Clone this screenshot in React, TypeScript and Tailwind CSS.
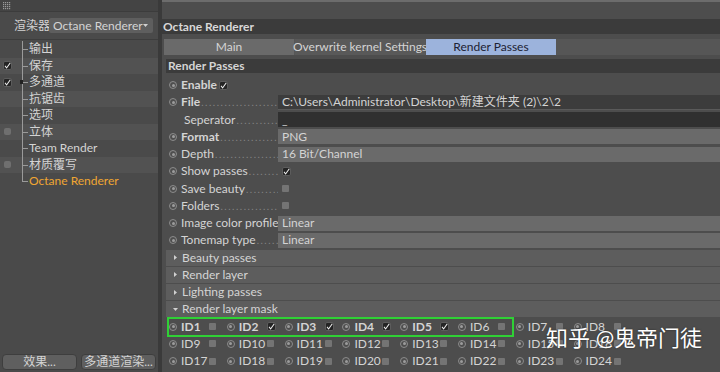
import React from 'react'

const Radio = () => (
  <span className="flex h-[8px] w-[8px] shrink-0 items-center justify-center rounded-full border border-[#8c8c8c] bg-[#4e4e4e]">
    <span className="block h-[3px] w-[3px] rounded-full bg-[#9c9c9c]" />
  </span>
)

const Check = ({ on }: { on?: boolean }) =>
  on ? (
    <span className="flex h-[9px] w-[9px] shrink-0 items-center justify-center rounded-[2px] border border-[#5c5c5c] bg-[#242424]">
      <svg width="7" height="7" viewBox="0 0 8 8">
        <path d="M1.2 4.4 L3 6.8 L7.2 0.8" stroke="#f0f0f0" strokeWidth="1.2" fill="none" />
      </svg>
    </span>
  ) : (
    <span className="block h-[7px] w-[7px] shrink-0 rounded-[1px] bg-[#747474]" />
  )

const Tri = ({ down }: { down?: boolean }) => (
  <svg width="5" height="5" viewBox="0 0 5 5" className="shrink-0">
    {down ? <path d="M0 1 L5 1 L2.5 4 Z" fill="#d0d0d0" /> : <path d="M1 0 L4 2.5 L1 5 Z" fill="#d0d0d0" />}
  </svg>
)

type RowProps = {
  label: string
  bold?: boolean
  radio?: boolean
  dots?: boolean
  children?: React.ReactNode
}

const Row = ({ label, bold, radio = true, dots = true, children }: RowProps) => (
  <div className="flex h-[17.25px] items-center">
    <div className="flex w-[112px] shrink-0 items-center overflow-hidden pl-[3px]">
      {radio ? <Radio /> : <span className="block w-[8px] shrink-0" />}
      <span className={`${radio ? 'ml-[4px]' : 'ml-[7px]'} ${bold ? 'font-bold' : ''}`}>{label}</span>
      {dots && (
        <span className="ml-[1px] flex-1 overflow-hidden text-[10px] tracking-[1.5px] text-[#858585]">
          ..........................................
        </span>
      )}
    </div>
    {children}
  </div>
)

const Field = ({ text, dark }: { text: string; dark?: string }) => (
  <div className={`flex h-[15px] flex-1 items-center pl-[4px] ${dark ?? 'bg-[#6a6a6a]'}`}>{text}</div>
)

const Group = ({ label, down }: { label: string; down?: boolean }) => (
  <div className="flex h-[17.25px] items-center">
    <div className="flex h-[16px] flex-1 items-center gap-[4px] bg-[#5d5d5d] pl-[7px]">
      <Tri down={down} />
      <span>{label}</span>
    </div>
  </div>
)

const IdCell = ({ n, on, bold }: { n: number; on?: boolean; bold?: boolean }) => (
  <div className="flex w-[57.8px] shrink-0 items-center">
    <Radio />
    <span className={`ml-[4px] min-w-[27px] ${bold ? 'font-bold' : ''}`}>ID{n}</span>
    <div className="ml-[1px] flex">
      <Check on={on} />
    </div>
  </div>
)

const tree = [
  { t: '输出' },
  { t: '保存', c: true },
  { t: '多通道', c: true, arrow: true },
  { t: '抗锯齿' },
  { t: '选项' },
  { t: '立体', u: true },
  { t: 'Team Render' },
  { t: '材质覆写', u: true },
  { t: 'Octane Renderer', active: true },
]

export default function App() {
  return (
    <div className="flex h-[372px] w-[720px] overflow-hidden whitespace-nowrap bg-[#4b4b4b] font-['Lato','Noto_Sans_CJK_SC',sans-serif] text-[12px] leading-none text-[#d4d4d4]">
      {/* left panel */}
      <div className="flex w-[158px] shrink-0 flex-col bg-[#4a4a4a]">
        <div className="flex h-[12px] items-center border-b border-[#3c3c3c] bg-[#444] pl-[3px]">
          <svg width="8" height="8" viewBox="0 0 8 8">
            {[0, 1, 2, 3].map((r) =>
              [0, 1, 2, 3].map((c) => <rect key={`${r}-${c}`} x={c * 2} y={r * 2} width="1.2" height="1.2" fill="#9a9a9a" />)
            )}
          </svg>
        </div>
        <div className="flex h-[28px] items-center border-b border-[#3d3d3d]">
          <span className="ml-[14px] w-[35px]">渲染器</span>
          <div className="flex h-[15px] w-[104px] items-center justify-between rounded-[2px] bg-[#5e5e5e] pl-[4px] pr-[5px]">
            <span>Octane Renderer</span>
            <Tri down />
          </div>
        </div>
        <div className="flex flex-col pt-[1px]">
          {tree.map((it, i) => (
            <div key={it.t} className={`relative flex h-[16.5px] items-center ${i % 2 ? 'bg-[#525252]' : 'bg-[#4a4a4a]'}`}>
              <div className="flex w-[15px] shrink-0 justify-center">
                {it.c && <Check on />}
                {it.u && <span className="block h-[7px] w-[7px] rounded-[2px] bg-[#6f6f6f]" />}
              </div>
              <div className="relative h-full w-[14px] shrink-0">
                <span className={`absolute left-[7px] w-px bg-[#9a9a9a] ${i === tree.length - 1 ? 'top-0 h-1/2' : 'top-0 h-full'}`} />
                <span className="absolute left-[7px] top-1/2 h-px w-[6px] bg-[#9a9a9a]" />
                {it.arrow && <span className="absolute left-[5px] top-[6px] h-[4px] w-[3px] bg-[#222]" />}
              </div>
              <span className={it.active ? 'text-[#f0a632]' : ''}>{it.t}</span>
            </div>
          ))}
        </div>
        <div className="flex-1" />
        <div className="flex gap-[4px] px-[2px] pb-[2px]">
          <div className="flex h-[16px] flex-1 items-center justify-center rounded-[4px] border border-[#3e3e3e] bg-[#5f5f5f]">效果...</div>
          <div className="flex h-[16px] flex-1 items-center justify-center rounded-[4px] border border-[#3e3e3e] bg-[#5f5f5f]">多通道渲染...</div>
        </div>
      </div>
      <div className="w-[4px] shrink-0 bg-[#3a3a3a]" />

      {/* right panel */}
      <div className="relative flex flex-1 flex-col border-t-2 border-[#6c6c6c] bg-[#4d4d4d]">
        <div className="h-[17px]" />
        <div className="flex h-[15px] items-center bg-[#3b3b3b] pl-[1px] font-bold text-[#d8d8d8]">Octane Renderer</div>
        <div className="h-[5px]" />
        <div className="ml-[2px] flex h-[16px] items-stretch bg-[#565656]">
          <div className="flex w-[130px] items-center justify-center bg-[#6a6a6a]">Main</div>
          <div className="ml-px flex w-[130px] items-center justify-center bg-[#595959]">Overwrite kernel Settings</div>
          <div className="ml-px flex w-[130px] items-center justify-center bg-[#9cb3dc] text-[#1c2233]">Render Passes</div>
        </div>
        <div className="h-[4px]" />
        <div className="ml-[4px] flex flex-col">
          <div className="flex h-[14px] items-center bg-[#3b3b3b] pl-[2px] font-bold">Render Passes</div>
          <div className="h-[3.5px]" />
          <div className="flex h-[17.25px] items-center pl-[3px]">
            <Radio />
            <span className="ml-[4px] font-bold">Enable</span>
            <div className="ml-[2px] flex">
              <Check on />
            </div>
          </div>
          <Row label="File" bold>
            <Field text="C:\Users\Administrator\Desktop\新建文件夹 (2)\2\2" dark="bg-[#3c3c3c] border-b border-[#5a5a5a]" />
          </Row>
          <Row label="Seperator" radio={false}>
            <Field text="_" dark="bg-[#303030]" />
          </Row>
          <Row label="Format" bold>
            <Field text="PNG" />
          </Row>
          <Row label="Depth">
            <Field text="16 Bit/Channel" />
          </Row>
          <Row label="Show passes">
            <div className="ml-[4px] flex">
              <Check on />
            </div>
          </Row>
          <Row label="Save beauty">
            <div className="ml-[4px] flex">
              <Check />
            </div>
          </Row>
          <Row label="Folders">
            <div className="ml-[4px] flex">
              <Check />
            </div>
          </Row>
          <Row label="Image color profile" dots={false}>
            <Field text="Linear" />
          </Row>
          <Row label="Tonemap type">
            <Field text="Linear" />
          </Row>
          <Group label="Beauty passes" />
          <Group label="Render layer" />
          <Group label="Lighting passes" />
          <Group label="Render layer mask" down />
          <div className="relative flex flex-col pl-[3px]">
            <div className="flex h-[17.25px] items-center">
              <IdCell n={1} bold />
              <IdCell n={2} bold on />
              <IdCell n={3} bold on />
              <IdCell n={4} bold on />
              <IdCell n={5} bold on />
              <IdCell n={6} />
              <IdCell n={7} />
              <IdCell n={8} />
            </div>
            <div className="flex h-[17.25px] items-center">
              {[9, 10, 11, 12, 13, 14, 15, 16].map((n) => (
                <IdCell key={n} n={n} />
              ))}
            </div>
            <div className="flex h-[17.25px] items-center">
              {[17, 18, 19, 20, 21, 22, 23, 24].map((n) => (
                <IdCell key={n} n={n} />
              ))}
            </div>
            <div className="absolute left-[1px] top-[-1px] h-[20px] w-[347px] border-2 border-[#2fd035]" />
          </div>
        </div>
        <div className="absolute left-[384px] top-[325px] text-[22px] text-white [text-shadow:0_0_2px_rgba(0,0,0,0.5)]">
          知乎 @鬼帝门徒
        </div>
      </div>
    </div>
  )
}
